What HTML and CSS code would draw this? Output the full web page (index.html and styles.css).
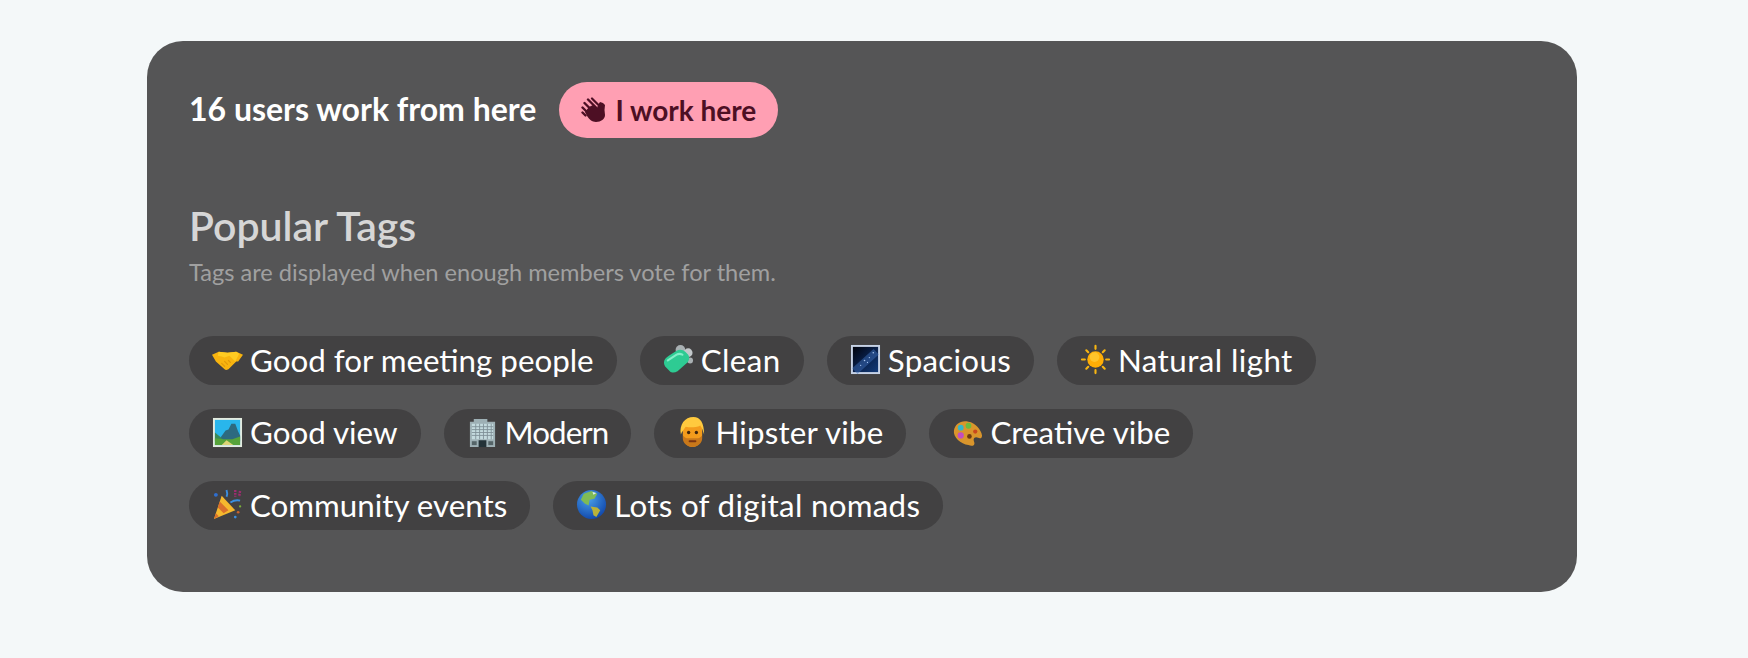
FILE: index.html
```html
<!DOCTYPE html>
<html lang="en">
<head>
<meta charset="utf-8">
<title>Popular Tags</title>
<link rel="stylesheet" href="styles.css">
</head>
<body>
<main class="card">
  <div class="presence">
    <span class="count">16 users work from here</span>
    <button class="work-btn">
      <svg class="wave" viewBox="0 0 26 26"><g fill="none" stroke="#4d0f24" stroke-linecap="round" stroke-width="2.4"><path d="M1.500 15.500l3 3M1.500 10.500l7 7M3.500 6l8 8M7 2.500l8 8"/></g><path d="M8 10l4-2 4 3 1-3 2-3 3 1 2 2-.5 5 .5 5c0 4-4 7-9 7-4 0-7-3-9-6L4 15z" fill="#4d0f24"/><path d="M11 1.500l6 6" stroke="#4d0f24" stroke-width="2.200" stroke-linecap="round"/></svg>
      <span>I work here</span>
    </button>
  </div>

  <h2 class="heading">Popular Tags</h2>
  <p class="sub">Tags are displayed when enough members vote for them.</p>

  <div class="tag-rows">
    <div class="tag-row">
      <span class="tag">
        <svg class="emoji" viewBox="0 0 32 32"><path d="M0 11l7-3 9 1 9-1 7 3-5 7-2 0-8 8c-2 1-3 1-4 0l-9-8H4z" fill="#f8b40f"/><path d="M7 8l9 1 9-1 3 2-4 8-6-6-5 2-3-1-4-1z" fill="#ffcb22"/><path d="M10 20l3 3M13 18l3 3M17 17l2 2" stroke="#e09a0a" stroke-width="1.200" stroke-linecap="round"/></svg>
        <span>Good for meeting people</span>
      </span>
      <span class="tag">
        <svg class="emoji" viewBox="0 0 32 32"><circle cx="18" cy="6" r="5" fill="#c3ccd0" opacity=".8"/><circle cx="26" cy="9" r="4.500" fill="#d9e0e3" opacity=".85"/><circle cx="28" cy="17" r="3" fill="#c3ccd0" opacity=".8"/><path d="M1 19c0-3 2-5 5-7l8-5c3-2 7-1 9 1l3 3c2 3 1 7-2 9l-9 8c-3 2-6 2-8 0l-4-4c-1-1-2-3-2-5z" fill="#2ecb93"/><path d="M5 17l9-6c2-1 4-1 6 0" stroke="#83eec8" stroke-width="2.200" fill="none" stroke-linecap="round"/></svg>
        <span class="ls-clean">Clean</span>
      </span>
      <span class="tag">
        <svg class="emoji" viewBox="0 0 32 32"><defs><linearGradient id="sky" x1="0" y1="0" x2="1" y2="1"><stop offset="0" stop-color="#01030c"/><stop offset=".55" stop-color="#0a2350"/><stop offset="1" stop-color="#123a78"/></linearGradient></defs><rect x="1" y="1" width="30" height="30" fill="#c6d2e6"/><rect x="3" y="3" width="26" height="26" fill="url(#sky)"/><path d="M5 28L27 8" stroke="#3c6db8" stroke-width="8" opacity=".5"/><g fill="#a9c6f2"><circle cx="24" cy="9" r=".8"/><circle cx="20" cy="14" r=".7"/><circle cx="15" cy="17" r=".8"/><circle cx="11" cy="22" r=".7"/><circle cx="18" cy="19" r=".6"/></g></svg>
        <span class="ls-wide">Spacious</span>
      </span>
      <span class="tag">
        <svg class="emoji" viewBox="0 0 32 32"><g stroke="#f7b512" stroke-width="2.200" stroke-linecap="round"><path d="M16 2v3M16 27v3M2 16h3M27 16h3M6.500 6.500l2 2M23.500 23.500l2 2M25.500 6.500l-2 2M8.500 23.500l-2 2"/></g><circle cx="16" cy="16" r="8.500" fill="#ffae05"/><circle cx="15" cy="13.500" r="5" fill="#ffc42a"/></svg>
        <span class="ls-natural">Natural light</span>
      </span>
    </div>
    <div class="tag-row">
      <span class="tag">
        <svg class="emoji" viewBox="0 0 32 32"><rect x="1" y="1" width="30" height="30" fill="#e4ece0"/><rect x="3" y="3" width="26" height="26" fill="#29b6ec"/><path d="M9 21l5-7 3-1 3-6 4 0 3 8 2 4v6H9z" fill="#2d6a80"/><path d="M3 16l6 5 4 4H3z" fill="#3a8a5a"/><path d="M3 22l9 1 9 0 8-3v9H3z" fill="#56a33a"/><path d="M10 29l5-5 7 5z" fill="#dcd576"/></svg>
        <span>Good view</span>
      </span>
      <span class="tag">
        <svg class="emoji" viewBox="0 0 32 32"><path d="M3 5h4V2h14v3h8v26H3z" fill="#9eb0b5"/><path d="M5 7h22v16H5z" fill="#c4dade"/><path d="M5 10h22M5 13h22M5 16h22M5 19h22M9 7v16M13 7v16M17 7v16M21 7v16M25 7v16" stroke="#7e9096" stroke-width=".9"/><rect x="12" y="24" width="8" height="7" fill="#243238"/><rect x="5" y="25" width="5" height="4" fill="#556468"/><rect x="22" y="25" width="5" height="4" fill="#556468"/></svg>
        <span class="ls-modern">Modern</span>
      </span>
      <span class="tag">
        <svg class="emoji" viewBox="0 0 32 32"><path d="M6 18c0 8 5 13 10 13s10-5 10-13V9H6z" fill="#f39c1c"/><path d="M6 19c2 2 3 3 6 3h8c3 0 4-1 6-3v3c0 5-5 9-10 9S6 27 6 22z" fill="#c9781a"/><path d="M4 18C2 8 8 0 17 0c7 0 11 6 11 18-1-3-2-7-4-9-5 2-11 2-15 1-2 3-4 5-5 8z" fill="#ffca3e"/><circle cx="12" cy="16" r="1.700" fill="#40260d"/><circle cx="20" cy="16" r="1.700" fill="#40260d"/><path d="M13 25h6" stroke="#7a3312" stroke-width="2" stroke-linecap="round"/></svg>
        <span class="ls-hipster">Hipster vibe</span>
      </span>
      <span class="tag">
        <svg class="emoji" viewBox="0 0 32 32"><path d="M2 14C3 7 10 3 17 5c7 1 13 8 14 14 0 4-3 3-6 2-3 0-3 3-2 5 1 3-2 5-6 3C9 28 1 21 2 14z" fill="#d9952c"/><circle cx="9" cy="11" r="3" fill="#35b5c9"/><circle cx="17" cy="9" r="3" fill="#6cbb3c"/><circle cx="9" cy="19" r="3.200" fill="#c44cc0"/><circle cx="24" cy="15" r="2.200" fill="#c9491d"/><circle cx="18" cy="20" r="2.400" fill="#6d3b12"/></svg>
        <span>Creative vibe</span>
      </span>
    </div>
    <div class="tag-row">
      <span class="tag">
        <svg class="emoji" viewBox="0 0 32 32"><path d="M2 31L10 7l14 15z" fill="#f5b82e"/><path d="M8 13l9 9-5 3-6-6zM4 25l3 3-5 3z" fill="#d9702c"/><path d="M19 14c3-2 6-3 10-2M15 8c1-2 1-4 0-7" stroke="#3a8fe0" stroke-width="2" fill="none"/><circle cx="4" cy="6" r="2" fill="#2f6fd0"/><path d="M24 1v7M29 2l-1 6" stroke="#a02c70" stroke-width="2.500" stroke-dasharray="2 1"/><circle cx="27" cy="24" r="1.400" fill="#c9632c"/><circle cx="24" cy="29" r="1.400" fill="#3a8fe0"/><circle cx="29" cy="18" r="1.200" fill="#7bb03a"/></svg>
        <span>Community events</span>
      </span>
      <span class="tag">
        <svg class="emoji" viewBox="0 0 32 32"><defs><radialGradient id="sea" cx=".4" cy=".3" r=".8"><stop offset="0" stop-color="#4aa0ea"/><stop offset="1" stop-color="#0b3fa5"/></radialGradient></defs><circle cx="16" cy="16" r="15" fill="url(#sea)"/><path d="M8 5l8-3 6 3-3 5-5 1-1 6-4-2-4-4z" fill="#7fbb55"/><path d="M15 18l7 1 3 3-4 7-3-2-1-5z" fill="#b9b23a"/><path d="M17 3l4 1-3 2z" fill="#dfeef3"/></svg>
        <span class="ls-wide">Lots of digital nomads</span>
      </span>
    </div>
  </div>
</main>
</body>
</html>
```
FILE: styles.css
```css
* { box-sizing: border-box; }
html, body { margin: 0; height: 100%; }
body {
  background: #f4f8f9;
  padding: 41px 171px 66px 147px;
  font-family: "Lato", "Open Sans", sans-serif;
}
.card {
  width: 1430px;
  height: 551px;
  padding: 41px 42px;
  background: #555556;
  border-radius: 36px;
}
.presence { display: flex; align-items: center; gap: 23px; }
.count { padding-bottom: 4px; color: #fff; font-size: 32px; font-weight: 700; }
.work-btn {
  display: flex; align-items: center; gap: 8px;
  height: 56px; padding: 0 22px;
  border: 0; border-radius: 28px;
  background: #ff9fb3; color: #4d0f24;
  font: 700 28px "Lato", sans-serif;
}
.wave { width: 26px; height: 26px; flex: none; }
.heading { margin: 66px 0 0; color: #d6d6d6; font-size: 41px; font-weight: 600; line-height: 44px; }
.sub { margin: 9px 0 0; color: #a0a0a0; font-size: 23.6px; line-height: 30px; }
.tag-rows { display: flex; flex-direction: column; gap: 23.5px; margin-top: 49px; }
.tag-row { display: flex; gap: 23px; }
.tag {
  display: flex; align-items: center; gap: 7px;
  height: 49px; padding: 0 23px 2px;
  border-radius: 25px;
  background: #424142; color: #fff;
  font-size: 31.3px; white-space: nowrap;
}
.emoji { width: 31px; height: 31px; flex: none; }
.ls-wide { letter-spacing: .29px; }
.ls-hipster { letter-spacing: .2px; }
.ls-clean { letter-spacing: .45px; }
.ls-natural { letter-spacing: .43px; }
.ls-modern { letter-spacing: -.9px; }
```
